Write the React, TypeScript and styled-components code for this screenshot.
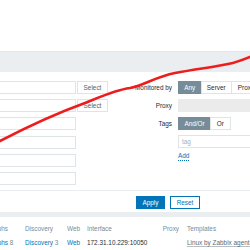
import React from 'react';
import styled, { createGlobalStyle } from 'styled-components';

const GlobalStyle = createGlobalStyle`
  html, body {
    margin: 0;
    padding: 0;
    background: #ffffff;
  }
  body {
    font-family: "Liberation Sans", Arial, sans-serif;
    font-size: 6.4px;
    color: #1f2c33;
  }
`;

// Layout
const Page = styled.div`
  position: relative;
  width: 250px;
  height: 250px;
  overflow: hidden;
  background: #ebeef0;
`;

const TitleBar = styled.div`
  height: 51px;
  background: #ffffff;
`;

const FilterTabs = styled.div`
  height: 21px;
  background: #ebeef0;
  border-top: 1px solid #e3e7ea;
  box-sizing: border-box;
`;

const FilterBody = styled.div`
  display: flex;
  background: #ffffff;
  padding-top: 9px;
  height: 119px;
  box-sizing: border-box;
  border-bottom: 1px solid #ebeef0;
`;

const LeftColumn = styled.div`
  display: flex;
  flex-direction: column;
  gap: 5.2px;
  margin-left: -20px;
`;

const FieldRow = styled.div`
  display: flex;
  gap: 1px;
`;

const TextBox = styled.div<{ $width: number; $disabled?: boolean }>`
  width: ${p => p.$width}px;
  height: 13px;
  box-sizing: border-box;
  border: 1px solid ${p => (p.$disabled ? '#ebebeb' : '#dfe4e7')};
  background: ${p => (p.$disabled ? '#ebebeb' : '#ffffff')};
  color: #a6b3ba;
  padding-left: 3px;
  line-height: 11px;
  flex-shrink: 0;
`;

const GreyButton = styled.div`
  width: 31px;
  height: 13px;
  box-sizing: border-box;
  border: 1px solid #dfe4e7;
  background: #ffffff;
  color: #53636c;
  display: flex;
  align-items: center;
  justify-content: center;
`;

const RightColumn = styled.div`
  display: grid;
  grid-template-columns: 64px 120px;
  column-gap: 6px;
  grid-template-rows: 13px 13px 13px 13px auto;
  row-gap: 5px;
`;

const Label = styled.div`
  text-align: right;
  line-height: 13px;
  color: #1f2c33;
`;

const Segmented = styled.div`
  display: flex;
  height: 13px;
`;

const Segment = styled.div<{ $active?: boolean; $width: number }>`
  width: ${p => p.$width}px;
  height: 13px;
  box-sizing: border-box;
  flex-shrink: 0;
  display: flex;
  align-items: center;
  justify-content: center;
  border: 1px solid ${p => (p.$active ? '#768d99' : '#dfe4e7')};
  margin-left: -1px;
  background: ${p => (p.$active ? '#768d99' : '#ffffff')};
  color: ${p => (p.$active ? '#ffffff' : '#1f2c33')};
  &:first-child {
    margin-left: 0;
  }
`;

const TagCell = styled.div`
  margin-top: -1px;
`;

const AddLink = styled.span`
  color: #0275b8;
  border-bottom: 1px dotted #0275b8;
  line-height: 8px;
  display: inline-block;
`;

const Footer = styled.div`
  display: flex;
  gap: 5px;
  height: 21px;
  padding: 5px 0 0 136px;
  box-sizing: border-box;
  background: #ffffff;
`;

const Button = styled.div<{ $primary?: boolean; $width: number }>`
  width: ${p => p.$width}px;
  height: 13px;
  box-sizing: border-box;
  display: flex;
  align-items: center;
  justify-content: center;
  border: 1px solid #0275b8;
  background: ${p => (p.$primary ? '#0275b8' : '#ffffff')};
  color: ${p => (p.$primary ? '#ffffff' : '#0275b8')};
`;

const Table = styled.div`
  margin-top: 5px;
  background: #ffffff;
  height: 40px;
`;

const TableRow = styled.div<{ $head?: boolean }>`
  display: grid;
  grid-template-columns: 38px 42px 20px 75.7px 24.3px 100px;
  margin-left: -13px;
  height: ${p => (p.$head ? 18 : 14)}px;
  box-sizing: border-box;
  align-items: center;
  white-space: nowrap;
  color: ${p => (p.$head ? '#768d99' : '#1f2c33')};
  padding-top: ${p => (p.$head ? 5 : 0)}px;
`;

const Link = styled.span`
  color: #0275b8;
`;

const Count = styled.span`
  color: #768d99;
`;

const TemplateLink = styled.span`
  color: #5b6b74;
  border-bottom: 1px solid #b5c0c6;
`;

const Overlay = styled.svg`
  position: absolute;
  left: 0;
  top: 0;
  pointer-events: none;
`;

export default function App() {
  return (
    <>
      <GlobalStyle />
      <Page>
        <TitleBar />
        <FilterTabs />
        <FilterBody>
          <LeftColumn>
            <FieldRow>
              <TextBox $width={96} />
              <GreyButton>Select</GreyButton>
            </FieldRow>
            <FieldRow>
              <TextBox $width={96} />
              <GreyButton>Select</GreyButton>
            </FieldRow>
            <TextBox $width={96} />
            <TextBox $width={96} />
            <TextBox $width={96} />
            <TextBox $width={96} />
          </LeftColumn>
          <RightColumn>
            <Label>Monitored by</Label>
            <Segmented>
              <Segment $active $width={23.5}>Any</Segment>
              <Segment $width={31.5}>Server</Segment>
              <Segment $width={30}>Proxy</Segment>
            </Segmented>
            <Label>Proxy</Label>
            <TextBox $width={120} $disabled />
            <Label>Tags</Label>
            <Segmented>
              <Segment $active $width={33}>And/Or</Segment>
              <Segment $width={20.5}>Or</Segment>
            </Segmented>
            <div />
            <TextBox $width={120}>tag</TextBox>
            <div />
            <TagCell>
              <AddLink>Add</AddLink>
            </TagCell>
          </RightColumn>
        </FilterBody>
        <Footer>
          <Button $primary $width={29}>Apply</Button>
          <Button $width={30}>Reset</Button>
        </Footer>
        <Table>
          <TableRow $head>
            <span>Graphs</span>
            <span>Discovery</span>
            <span>Web</span>
            <span>Interface</span>
            <span>Proxy</span>
            <span>Templates</span>
          </TableRow>
          <TableRow>
            <span><Link>Graphs</Link> <Count>8</Count></span>
            <span><Link>Discovery</Link> <Count>3</Count></span>
            <span><Link>Web</Link></span>
            <span>172.31.10.229:10050</span>
            <span />
            <span><TemplateLink>Linux by Zabbix agent</TemplateLink></span>
          </TableRow>
        </Table>
        <Overlay width="250" height="250" viewBox="0 0 250 250">
          <path
            d="M-2,142 C25,128 60,112 85,103 C100,97 115,90 130,88 C145,85 155,77 175,73 C195,69 215,67 228,64 C238,62 245,59 252,56"
            fill="none"
            stroke="#ee1c1c"
            strokeWidth="2.6"
            strokeLinecap="round"
            strokeLinejoin="round"
          />
        </Overlay>
      </Page>
    </>
  );
}
